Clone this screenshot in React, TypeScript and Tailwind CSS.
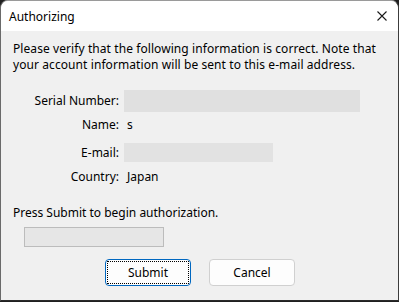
import React from "react";

export default function App() {
  const font = { fontFamily: '"Segoe UI", "Noto Sans", "Liberation Sans", sans-serif' };
  return (
    <div className="w-[399px] h-[302px] bg-[#202020]" style={font}>
      <div className="w-[399px] h-[301px] rounded-t-[8px] border-t border-l border-r border-b border-t-[#9a9a9a] border-l-[#6a6a6a] border-r-[#3c3c3c] border-b-[#2a2a2a] bg-[#f0f0f0] overflow-hidden flex flex-col text-[12px] text-black">
        <div className="h-[30px] bg-white flex items-center justify-between pl-[8px] pr-[10px] shrink-0">
          <span className="text-[12px] leading-[16px] mt-[1px]">Authorizing</span>
          <svg width="10" height="10" viewBox="0 0 10 10" className="mr-[1px]">
            <path d="M0.5 0.5 L9.5 9.5 M9.5 0.5 L0.5 9.5" stroke="#1a1a1a" strokeWidth="1.1" />
          </svg>
        </div>
        <div className="flex flex-col pl-[12px] pt-[10px]">
          <p className="leading-[16px] w-[380px] tracking-[0.08px]">
            Please verify that the following information is correct. Note that your account information will be sent to this e-mail address.
          </p>
          <div className="flex items-center h-[22px] mt-[17px]">
            <span className="w-[106px] text-right">Serial Number:</span>
            <div className="ml-[5px] w-[236px] h-[22px] bg-[#e0e0e0]" />
          </div>
          <div className="flex items-center h-[20px] mt-[3px]">
            <span className="w-[106px] text-right">Name:</span>
            <span className="ml-[8px]">s</span>
          </div>
          <div className="flex items-center h-[19px] mt-[8px]">
            <span className="w-[106px] text-right">E-mail:</span>
            <div className="ml-[5px] w-[149px] h-[19px] bg-[#e2e2e2]" />
          </div>
          <div className="flex items-center h-[20px] mt-[5px]">
            <span className="w-[106px] text-right">Country:</span>
            <span className="ml-[8px]">Japan</span>
          </div>
          <p className="leading-[16px] mt-[18px]">Press Submit to begin authorization.</p>
          <div className="ml-[11px] mt-[6px] w-[140px] h-[20px] border border-[#bcbcbc] bg-[#e6e6e6]" />
          <div className="flex mt-[12px] ml-[92px] gap-[18px]">
            <button className="w-[86px] h-[27px] rounded-[4px] border border-[#0067c0] bg-[#fdfdfd] p-[1px] flex">
              <span className="flex-1 border border-dotted border-black flex items-center justify-center leading-none">Submit</span>
            </button>
            <button className="w-[86px] h-[27px] rounded-[4px] border border-[#d0d0d0] bg-[#fdfdfd] flex items-center justify-center leading-none">
              Cancel
            </button>
          </div>
        </div>
      </div>
    </div>
  );
}
